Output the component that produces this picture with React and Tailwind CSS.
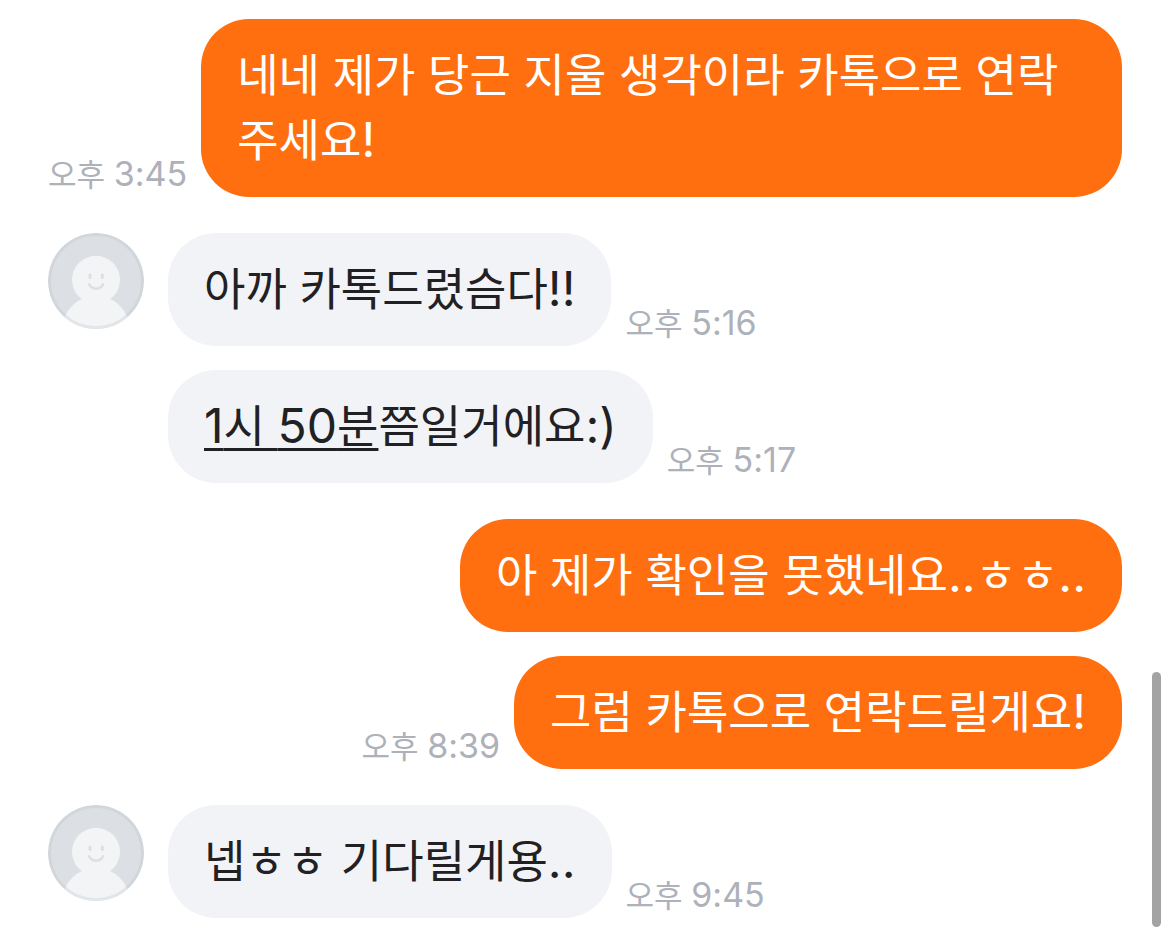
import { useId } from "react";

function Avatar() {
  const clip = useId();
  return (
    <svg className="size-24 shrink-0" viewBox="0 0 96 96" role="img" aria-label="프로필">
      <defs>
        <clipPath id={clip}><circle cx="48" cy="48" r="48" /></clipPath>
      </defs>
      <g clipPath={`url(#${clip})`}>
        <circle cx="48" cy="48" r="48" fill="#dcdfe3" />
        <circle cx="48" cy="97" r="34" fill="#f3f4f6" />
        <circle cx="48" cy="46.8" r="24" fill="#f3f4f6" />
      </g>
      <circle cx="48" cy="48" r="46.5" fill="none" stroke="#a8b4bc" strokeOpacity="0.22" strokeWidth="3" />
      <g fill="none" stroke="#dcdee2" strokeLinecap="round">
        <path d="M42 42v2.6M54.3 42v2.6" strokeWidth="3" />
        <path d="M41.2 51.2c2.8 6 11 6 13.8 0" strokeWidth="2.4" />
      </g>
    </svg>
  );
}

const pieces = (text) => text.split(/([!-~]+)/).filter(Boolean);

// Digits and punctuation are set a little larger than the Hangul beside them.
function Mixed({ text, latin }) {
  return pieces(text).map((part, i) =>
    /^[!-~]/.test(part) ? <span key={i} className={latin}>{part}</span> : part
  );
}

function Message({ text }) {
  return <Mixed text={text} latin="text-[48px] leading-none" />;
}

function Time({ children }) {
  return (
    <time className="shrink-0 pb-0.5 text-[31px] leading-10 text-[#adb1ba]">
      <Mixed text={children} latin="text-[34px] leading-none" />
    </time>
  );
}

function Sent({ time, children }) {
  return (
    <div className="flex items-end justify-end gap-3.5">
      {time && <Time>{time}</Time>}
      <p className="rounded-[48px] bg-[#ff6f0f] px-9 py-6 text-[45px] leading-[65px] text-white">{children}</p>
    </div>
  );
}

function Received({ avatar, time, children }) {
  return (
    <div className="flex items-start gap-6">
      {avatar ? <Avatar /> : <div className="w-24 shrink-0" />}
      <div className="flex items-end gap-3.5">
        <p className="rounded-[48px] bg-[#f2f3f7] px-9 py-6 text-[45px] leading-[65px] text-[#212124]">{children}</p>
        <Time>{time}</Time>
      </div>
    </div>
  );
}

export default function App() {
  return (
    <main className="relative flex min-h-screen flex-col gap-9 bg-white px-12 pt-[19px] font-['Inter','Noto_Sans_CJK_KR',sans-serif]">
      <Sent time="오후 3:45"><Message text="네네 제가 당근 지울 생각이라 카톡으로 연락주세요!" /></Sent>
      <div className="flex flex-col gap-6">
        <Received avatar time="오후 5:16"><Message text="아까 카톡드렸슴다!!" /></Received>
        <Received time="오후 5:17">
          <a href="#time" className="underline decoration-[3px] underline-offset-[5px]"><Message text="1시 50분" /></a>
          <Message text="쯤일거에요:)" />
        </Received>
      </div>
      <div className="flex flex-col gap-6">
        <Sent><Message text="아 제가 확인을 못했네요..ㅎㅎ.." /></Sent>
        <Sent time="오후 8:39"><Message text="그럼 카톡으로 연락드릴게요!" /></Sent>
      </div>
      <Received avatar time="오후 9:45"><Message text="넵ㅎㅎ 기다릴게용.." /></Received>
      <div className="absolute top-[672px] right-[9px] h-[255px] w-[9px] rounded-full bg-[#a3a3a3]" />
    </main>
  );
}
